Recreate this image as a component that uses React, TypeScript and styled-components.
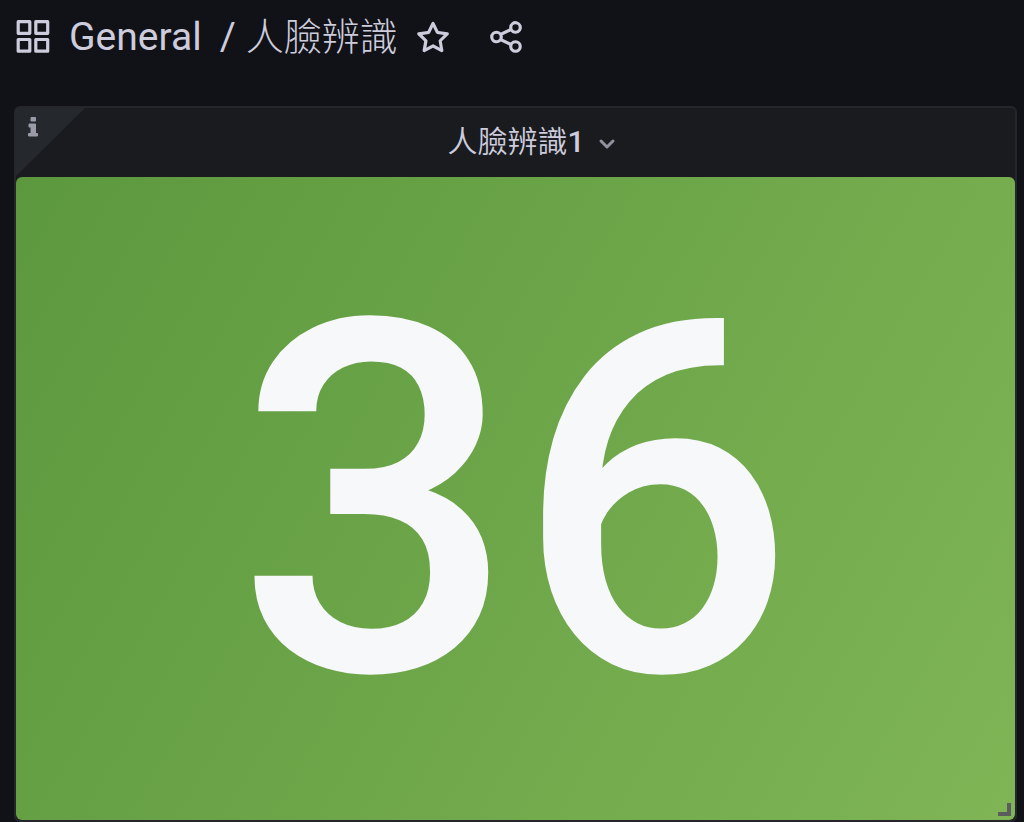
import React from 'react';
import styled, { createGlobalStyle } from 'styled-components';

const GlobalStyle = createGlobalStyle`
  * { box-sizing: border-box; }
  body { margin: 0; background: #111217; color: #ccccdc; font-family: Roboto, "Noto Sans CJK TC", sans-serif; }
`;

const Page = styled.div`
  display: flex;
  flex-direction: column;
  min-height: 100vh;
  padding: 0 7px 0 14px;
`;

const Toolbar = styled.header`
  display: flex;
  align-items: center;
  height: 74px;
  margin-bottom: 32px;
`;

const Crumbs = styled.nav`
  display: flex;
  align-items: baseline;
  font-size: 39px;
  line-height: 56px;
  white-space: nowrap;
`;

const Crumb = styled.a<{ $light?: boolean }>`
  color: inherit;
  text-decoration: none;
  font-size: ${p => (p.$light ? 38 : 39)}px;
  font-weight: ${p => (p.$light ? 200 : 400)};
`;

const Slash = styled.span`
  margin: 0 10px 0 18px;
`;

const IconButton = styled.button<{ $gap: number }>`
  display: flex;
  padding: 0;
  border: 0;
  background: none;
  color: inherit;
  margin: 0 0 0 ${p => p.$gap}px;
`;

const DashIcon = styled.svg`
  flex: none;
  margin: 0 17px 0 0;
`;

const Panel = styled.section`
  position: relative;
  flex: 1;
  display: flex;
  flex-direction: column;
  border: 2px solid #25262b;
  border-radius: 6px;
  background: #1a1b1f;
`;

const PanelHeader = styled.header`
  display: flex;
  align-items: center;
  justify-content: center;
  height: 69px;
  padding: 0 0 2px 32px;
`;

const Title = styled.h2`
  margin: 0;
  font-size: 30px;
  line-height: 44px;
  font-weight: 500;
`;

const TitleCjk = styled.span`
  font-weight: 350;
`;

const InfoCorner = styled.button`
  position: absolute;
  top: 0;
  left: 0;
  width: 70px;
  height: 69px;
  padding: 0;
  border: 0;
  background: none;
`;

const Stat = styled.div`
  flex: 1;
  display: flex;
  align-items: center;
  justify-content: center;
  padding-top: 6px;
  border-radius: 6px;
  background: linear-gradient(120deg, #5c983e, #7fb555);
  color: #f7f8fa;
  font-size: 492px;
  line-height: 600px;
  font-weight: 500;
`;

const ResizeHandle = styled.svg`
  position: absolute;
  right: 4px;
  bottom: 4px;
`;

export default function App() {
  return (
    <>
      <GlobalStyle />
      <Page>
        <Toolbar>
          <DashIcon width="38" height="38" viewBox="0 0 38 38" fill="none" stroke="currentColor" strokeWidth="3.2" strokeLinejoin="round">
            <path d="M4.2 3.7h11.6v11.6H4.2zM21.8 3.7h11.9v11.6H21.8zM4.2 21.5h11.6v11.7H4.2zM21.8 21.5h11.9v11.7H21.8z" />
          </DashIcon>
          <Crumbs>
            <Crumb href="#general">General</Crumb>
            <Slash>/</Slash>
            <Crumb href="#dashboard" $light>人臉辨識</Crumb>
          </Crumbs>
          <IconButton $gap={16} aria-label="Mark as favorite">
            <svg width="38" height="38" viewBox="0 0 24 24" fill="currentColor">
              <path d="M22 9.67a1 1 0 0 0-.86-.67l-5.69-.83L12.9 3a1 1 0 0 0-1.8 0L8.55 8.16 2.86 9a1 1 0 0 0-.81.68 1 1 0 0 0 .25 1l4.13 4-1 5.68a1 1 0 0 0 1.47 1.08l5.1-2.67 5.1 2.67a.93.93 0 0 0 .46.12 1 1 0 0 0 .59-.19 1 1 0 0 0 .4-1l-1-5.68 4.13-4A1 1 0 0 0 22 9.67Zm-6.15 4a1 1 0 0 0-.29.88l.72 4.2-3.76-2a1.06 1.06 0 0 0-.94 0l-3.76 2 .72-4.2a1 1 0 0 0-.29-.88l-3-3 4.21-.61a1 1 0 0 0 .76-.55L12 5.7l1.88 3.82a1 1 0 0 0 .76.55l4.21.61Z" />
            </svg>
          </IconButton>
          <IconButton $gap={35} aria-label="Share dashboard">
            <svg width="38" height="38" viewBox="0 0 24 24" fill="currentColor">
              <path d="M18 14a4 4 0 0 0-3.08 1.48l-5.1-2.35a3.64 3.64 0 0 0 0-2.26l5.1-2.35A4 4 0 1 0 14 6a4.17 4.17 0 0 0 .07.71L8.79 9.14a4 4 0 1 0 0 5.72l5.28 2.43A4.17 4.17 0 0 0 14 18a4 4 0 1 0 4-4ZM18 4a2 2 0 1 1-2 2 2 2 0 0 1 2-2ZM6 14a2 2 0 1 1 2-2 2 2 0 0 1-2 2Zm12 6a2 2 0 1 1 2-2 2 2 0 0 1-2 2Z" />
            </svg>
          </IconButton>
        </Toolbar>
        <Panel>
          <PanelHeader>
            <Title><TitleCjk>人臉辨識</TitleCjk>1</Title>
            <IconButton $gap={13} aria-label="Panel menu">
              <svg width="18" height="18" viewBox="0 0 18 18" fill="none" stroke="#92929e" strokeWidth="3" strokeLinecap="round" strokeLinejoin="round">
                <path d="M3 8l6 6 6-6" />
              </svg>
            </IconButton>
          </PanelHeader>
          <InfoCorner aria-label="Panel description">
            <svg width="70" height="69" viewBox="0 0 70 69">
              <path d="M0 0H69L0 68z" fill="#25282d" />
              <path d="M15 9.500h4.500v3.500h-4.500zM13 16h6.500v9.500h2v2.500H12.500v-2.500h2.500v-6.500h-2z" fill="#9a9ba6" stroke="#9a9ba6" strokeWidth="1" strokeLinejoin="round" />
            </svg>
          </InfoCorner>
          <Stat>36</Stat>
          <ResizeHandle width="13" height="13" viewBox="0 0 13 13" fill="none" stroke="#5b5c5e" strokeWidth="4">
            <path d="M11 0v11H0" />
          </ResizeHandle>
        </Panel>
      </Page>
    </>
  );
}
